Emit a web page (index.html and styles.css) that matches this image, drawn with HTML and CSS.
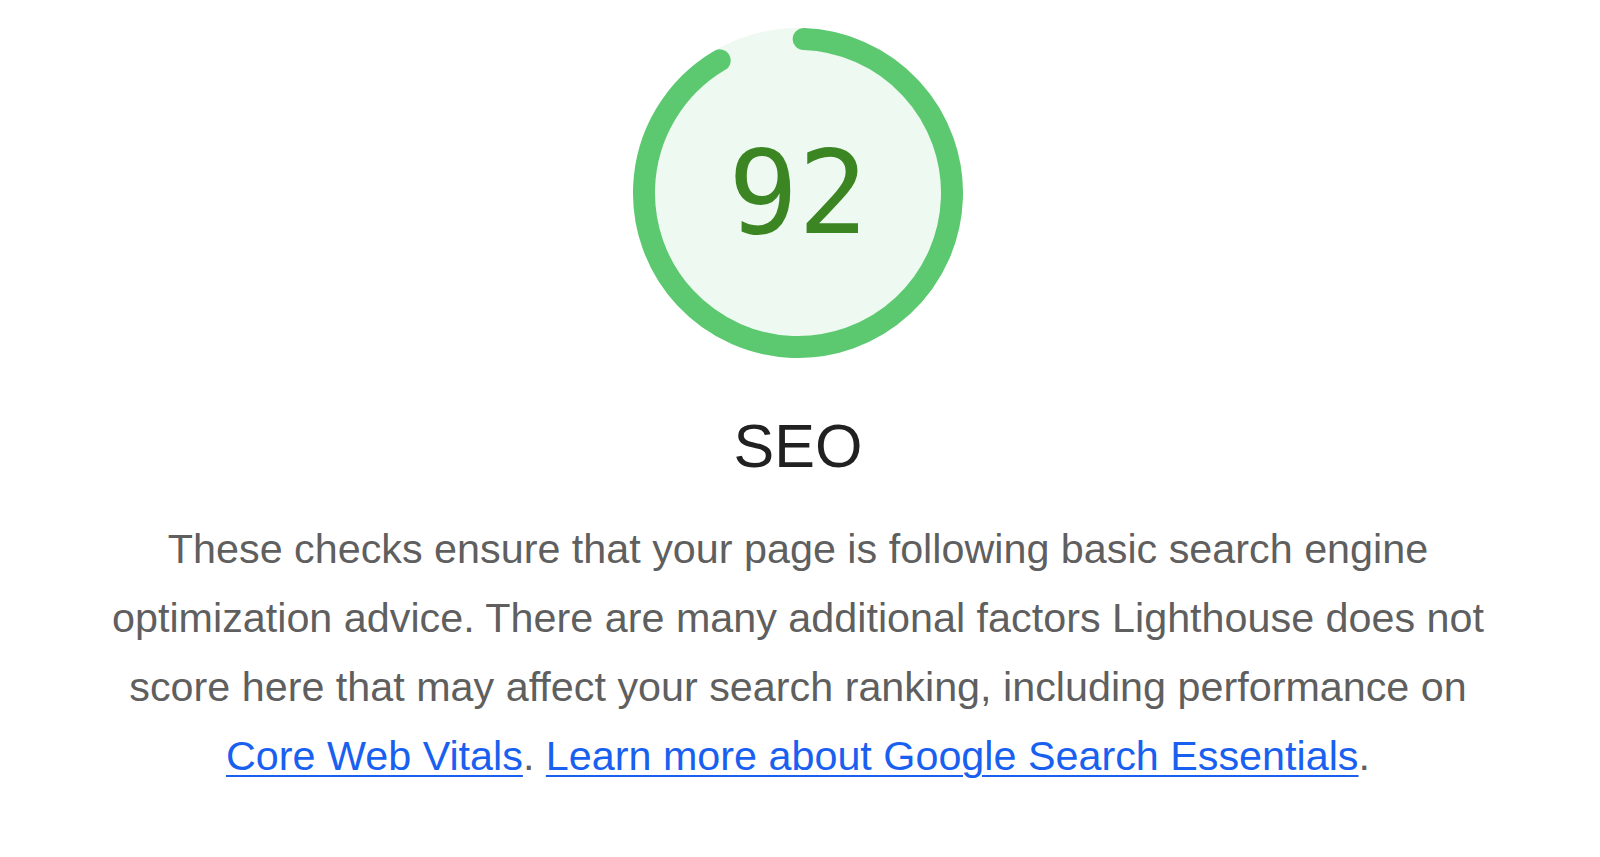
FILE: index.html
```html
<!DOCTYPE html>
<html lang="en">
<head>
  <meta charset="UTF-8">
  <title>SEO</title>
  <link rel="stylesheet" href="styles.css">
</head>
<body>
  <div class="categoria">
    <div class="gauge">
      <svg viewBox="0 0 120 120" class="gauge-svg">
        <circle class="gauge-base" r="56" cx="60" cy="60"></circle>
        <circle class="gauge-arc" r="56" cx="60" cy="60"></circle>
      </svg>
      <div class="gauge-numero">92</div>
    </div>
    <h2 class="titulo">SEO</h2>
    <p class="descricao">These checks ensure that your page is following basic search engine optimization advice. There are many additional factors Lighthouse does not score here that may affect your search ranking, including performance on <a href="#">Core Web Vitals</a>. <a href="#">Learn more about Google Search Essentials</a>.</p>
  </div>
</body>
</html>
```

FILE: styles.css
```css
body {
  margin: 0;
  background: #fff;
  font-family: "Liberation Sans", Arial, sans-serif;
}
.categoria {
  display: flex;
  flex-direction: column;
  align-items: center;
  padding: 28px 4px 0 0;
}
.gauge {
  position: relative;
  width: 330px;
  height: 330px;
}
.gauge-svg {
  width: 330px;
  height: 330px;
  display: block;
}
.gauge-base {
  fill: #eef9f1;
  stroke: #eef9f1;
  stroke-width: 8;
}
.gauge-arc {
  fill: none;
  stroke: #5cc970;
  stroke-width: 8;
  stroke-linecap: round;
  stroke-dasharray: 319.8 351.9;
  transform: rotate(-87.9deg);
  transform-origin: 60px 60px;
}
.gauge-numero {
  position: absolute;
  left: 0;
  right: 0;
  top: 0;
  bottom: 0;
  display: flex;
  align-items: center;
  justify-content: center;
  font-family: "DejaVu Sans Mono", monospace;
  font-size: 116px;
  color: #3b8623;
  padding-bottom: 2px;
}
.titulo {
  font-weight: normal;
  font-size: 61px;
  color: #212121;
  margin: 58px 0 0;
  line-height: 1;
}
.descricao {
  max-width: 1420px;
  margin: 38px 0 0;
  text-align: center;
  font-size: 41.3px;
  line-height: 69px;
  color: #5f5f5f;
}
.descricao a {
  color: #1a60f0;
  text-decoration-thickness: 2px;
  text-underline-offset: 5px;
}
```
